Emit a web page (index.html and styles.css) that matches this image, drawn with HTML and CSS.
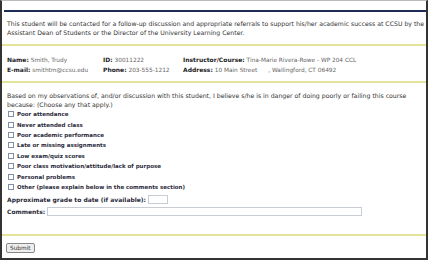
FILE: index.html
```html
<!doctype html>
<html lang="en">
<head>
    <meta charset="UTF-8">
    <title>Student Referral</title>
    <link rel="stylesheet" href="styles.css">
</head>
<body>
<div class="frame">
    <div class="topbar"></div>

    <div class="section intro">
        This student will be contacted for a follow-up discussion and appropriate referrals to support his/her academic success at CCSU by the
        Assistant Dean of Students or the Director of the University Learning Center.
    </div>

    <div class="section info">
        <div class="info-row">
            <div class="col1"><b>Name:</b> <span class="val">Smith, Trudy</span></div>
            <div class="col2"><b>ID:</b> <span class="val">30011222</span></div>
            <div class="col3"><b>Instructor/Course:</b> <span class="val">Tina-Marie Rivera-Rowe - WP 204 CCL</span></div>
        </div>
        <div class="info-row">
            <div class="col1"><b>E-mail:</b> <span class="val">smithtm@ccsu.edu</span></div>
            <div class="col2"><b>Phone:</b> <span class="val">203-555-1212</span></div>
            <div class="col3"><b>Address:</b> <span class="val">10 Main Street &nbsp;&nbsp;&nbsp;&nbsp;&nbsp;, Wallingford, CT 06492</span></div>
        </div>
    </div>

    <div class="section form">
        <p class="lead">Based on my observations of, and/or discussion with this student, I believe s/he is in danger of doing poorly or failing this course
            because: (Choose any that apply.)</p>
        <label class="check"><input type="checkbox"> Poor attendance</label>
        <label class="check"><input type="checkbox"> Never attended class</label>
        <label class="check"><input type="checkbox"> Poor academic performance</label>
        <label class="check"><input type="checkbox"> Late or missing assignments</label>
        <label class="check"><input type="checkbox"> Low exam/quiz scores</label>
        <label class="check"><input type="checkbox"> Poor class motivation/attitude/lack of purpose</label>
        <label class="check"><input type="checkbox"> Personal problems</label>
        <label class="check"><input type="checkbox"> Other (please explain below in the comments section)</label>
        <div class="field grade-row"><b>Approximate grade to date (if available):</b> <input class="grade" type="text"></div>
        <div class="field comments-row"><b>Comments:</b> <input class="comments" type="text"></div>
    </div>

    <div class="actions">
        <button class="submit">Submit</button>
    </div>
</div>
</body>
</html>
```

FILE: styles.css
```css
body {
    margin: 0;
    background: #fff;
    font-family: "DejaVu Sans", Verdana, sans-serif;
    font-size: 6.2px;
    color: #333;
}

.frame {
    width: 428px;
    height: 260px;
    box-sizing: border-box;
    border: 2px solid #333;
    border-top: 1px solid #bbb;
    display: flex;
    flex-direction: column;
}

.topbar {
    height: 9px;
    margin-left: 2px;
    border-bottom: 2px solid #1f2d55;
}

.section {
    border-bottom: 2px solid #e3e39a;
    padding-left: 5px;
}

.intro {
    padding-top: 8px;
    padding-bottom: 7px;
    line-height: 8.5px;
}

.info {
    padding-top: 9px;
    padding-bottom: 6px;
}

.info-row {
    display: flex;
    height: 10px;
    line-height: 10px;
    font-size: 6px;
}

.info b {
    color: #222;
}

.col1 {
    width: 96px;
}

.col2 {
    width: 80px;
}

.val {
    color: #666;
    font-size: 5.8px;
}

.form {
    padding-top: 8px;
    padding-bottom: 16.8px;
}

.lead {
    margin: 0;
    line-height: 9px;
}

.check {
    display: flex;
    align-items: center;
    height: 10.4px;
    font-size: 5.5px;
    font-weight: bold;
    color: #2a2a3a;
}

.check input {
    appearance: none;
    width: 6px;
    height: 6px;
    margin: 0 3px 0 1px;
    border: 1px solid #7f8fa6;
    background: #fff;
}

.field {
    display: flex;
    align-items: center;
    font-size: 6px;
    color: #2a2a3a;
}

.grade-row {
    height: 13px;
    margin-top: 1px;
}

.comments-row {
    height: 11px;
}

.field input {
    height: 9px;
    box-sizing: border-box;
    margin: 0 0 0 2px;
    padding: 0;
    border: 1px solid #c8ccd4;
    background: #fff;
}

.grade {
    width: 20px;
}

.comments {
    width: 315px;
}

.actions {
    padding: 7.5px 0 0 4px;
}

.submit {
    font-family: "DejaVu Sans", Verdana, sans-serif;
    font-size: 5.8px;
    color: #333;
    height: 10px;
    padding: 0 3px;
    border: 1px solid #888;
    border-radius: 2px;
    background: #eee;
}
```
